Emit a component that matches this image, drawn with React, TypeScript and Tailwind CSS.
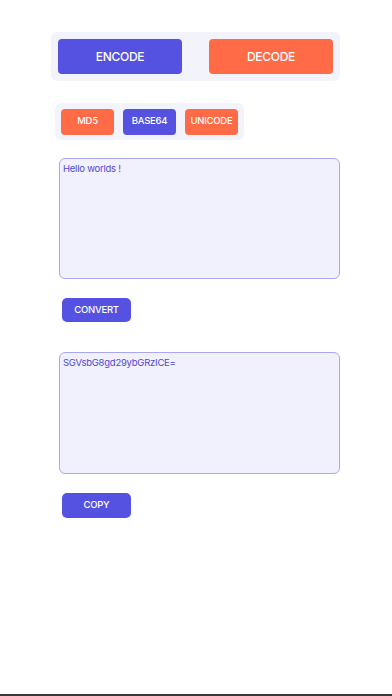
import { useState } from "react";

const font = { fontFamily: "Inter, 'Open Sans', 'Liberation Sans', sans-serif" };

export default function App() {
  const [mode, setMode] = useState<"encode" | "decode">("encode");
  const [algo, setAlgo] = useState("BASE64");
  const [input, setInput] = useState("Hello worlds !");
  const [output] = useState("SGVsbG8gd29ybGRzICE=");

  return (
    <div className="flex h-[696px] w-full flex-col bg-white" style={font}>
      <div className="flex-1">
        {/* mode switch */}
        <div className="ml-[51px] mt-[32px] flex h-[49px] w-[289px] items-center justify-between rounded-md bg-[#f3f3fc] px-[7px]">
          <button
            onClick={() => setMode("encode")}
            className="h-[35px] w-[124px] rounded-[4px] bg-[#5552e2] text-[12px] font-medium tracking-tight text-white"
          >
            ENCODE
          </button>
          <button
            onClick={() => setMode("decode")}
            className="h-[35px] w-[124px] rounded-[4px] bg-[#ff6a47] text-[12px] font-medium tracking-tight text-white"
          >
            DECODE
          </button>
        </div>

        {/* algorithm switch */}
        <div className="ml-[55px] mt-[22px] flex h-[37px] w-[189px] items-center gap-[9px] rounded-md bg-[#f3f3fc] px-[6px]">
          {["MD5", "BASE64", "UNICODE"].map((a) => (
            <button
              key={a}
              onClick={() => setAlgo(a)}
              className={`h-[26px] w-[54px] rounded-[4px] text-[9.5px] font-medium tracking-tight text-white ${
                a === "BASE64" ? "bg-[#5552e2]" : "bg-[#ff6a47]"
              }`}
            >
              {a}
            </button>
          ))}
        </div>

        <div className="ml-[59px] w-[281px]">
          <textarea
            value={input}
            onChange={(e) => setInput(e.target.value)}
            className="mt-[18px] block h-[121px] w-full resize-none rounded-[6px] border border-[#aaa6ef] bg-[#f1f0fd] px-[3px] py-[3px] text-[9.5px] leading-[14px] tracking-tight text-[#5248d4] outline-none"
          />
          <button className="ml-[3px] mt-[19px] h-[24px] w-[69px] rounded-[5px] bg-[#5552e2] text-[9.5px] font-medium tracking-tight text-white">
            CONVERT
          </button>
          <textarea
            value={output}
            readOnly
            className="mt-[30px] block h-[122px] w-full resize-none rounded-[6px] border border-[#aaa6ef] bg-[#f1f0fd] px-[3px] py-[3px] text-[9.5px] leading-[14px] tracking-tight text-[#5248d4] outline-none"
          />
          <button className="ml-[3px] mt-[19px] h-[25px] w-[69px] rounded-[5px] bg-[#5552e2] text-[9.5px] font-medium tracking-tight text-white">
            COPY
          </button>
        </div>
        <span className="hidden">{mode}{algo}</span>
      </div>
      <div className="h-[2px] bg-[#3a3a3a]" />
    </div>
  );
}
